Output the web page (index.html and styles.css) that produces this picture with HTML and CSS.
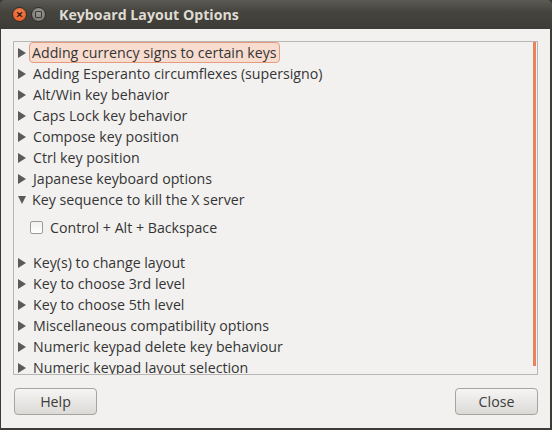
FILE: index.html
```html
<!DOCTYPE html>
<html lang="en">
<head>
    <meta charset="UTF-8">
    <title>Keyboard Layout Options</title>
    <link rel="stylesheet" href="styles.css">
</head>
<body>
    <div class="window">
        <div class="titlebar">
            <span class="wbtn close">&times;</span>
            <span class="wbtn mini"></span>
            <span class="title">Keyboard Layout Options</span>
        </div>
        <div class="content">
            <div class="list">
                <div class="rows">
                    <div class="row"><span class="arrow"></span><span class="label selected">Adding currency signs to certain keys</span></div>
                    <div class="row"><span class="arrow"></span><span class="label">Adding Esperanto circumflexes (supersigno)</span></div>
                    <div class="row"><span class="arrow"></span><span class="label">Alt/Win key behavior</span></div>
                    <div class="row"><span class="arrow"></span><span class="label">Caps Lock key behavior</span></div>
                    <div class="row"><span class="arrow"></span><span class="label">Compose key position</span></div>
                    <div class="row"><span class="arrow"></span><span class="label">Ctrl key position</span></div>
                    <div class="row"><span class="arrow"></span><span class="label">Japanese keyboard options</span></div>
                    <div class="row"><span class="arrow open"></span><span class="label">Key sequence to kill the X server</span></div>
                    <div class="option"><span class="check"></span><span class="label">Control + Alt + Backspace</span></div>
                    <div class="row"><span class="arrow"></span><span class="label">Key(s) to change layout</span></div>
                    <div class="row"><span class="arrow"></span><span class="label">Key to choose 3rd level</span></div>
                    <div class="row"><span class="arrow"></span><span class="label">Key to choose 5th level</span></div>
                    <div class="row"><span class="arrow"></span><span class="label">Miscellaneous compatibility options</span></div>
                    <div class="row"><span class="arrow"></span><span class="label">Numeric keypad delete key behaviour</span></div>
                    <div class="row"><span class="arrow"></span><span class="label">Numeric keypad layout selection</span></div>
                </div>
                <div class="scrollbar"></div>
            </div>
            <div class="actions">
                <button>Help</button>
                <button>Close</button>
            </div>
        </div>
    </div>
</body>
</html>
```
FILE: styles.css
```css
body {
    margin: 0;
    font-family: "Open Sans", "DejaVu Sans", sans-serif;
    background-color: #3c3b37;
}

.window {
    width: 552px;
    height: 430px;
    display: flex;
    flex-direction: column;
}

.titlebar {
    height: 29px;
    display: flex;
    align-items: center;
    background: linear-gradient(#5b5a53, #45443f 40%, #3c3b37);
    border-radius: 5px 5px 0 0;
    padding-left: 12px;
}

.wbtn {
    width: 15px;
    height: 15px;
    border-radius: 50%;
    box-sizing: border-box;
    display: flex;
    align-items: center;
    justify-content: center;
}

.close {
    background: radial-gradient(circle at 50% 35%, #f48454, #e0531c);
    border: 1px solid #2e2d29;
    color: #3a1a0c;
    font-size: 13px;
    line-height: 1;
    font-weight: bold;
}

.mini {
    margin-left: 4px;
    background: radial-gradient(circle at 50% 35%, #9a9892, #75736e);
    border: 1px solid #2e2d29;
}

.mini::after {
    content: "";
    width: 5px;
    height: 5px;
    border: 1px solid #3a3935;
    border-radius: 1px;
}

.title {
    margin-left: 13px;
    color: #dfdbd2;
    font-weight: bold;
    font-size: 14.2px;
}

.content {
    flex: 1;
    background-color: #f2f1f0;
    margin: 0 2px 2px 1px;
    padding: 12px 12px 0 12px;
    display: flex;
    flex-direction: column;
}

.list {
    height: 334px;
    box-sizing: border-box;
    border: 1px solid #b8b6b2;
    display: flex;
    overflow: hidden;
}

.rows {
    flex: 1;
    padding-left: 3px;
}

.row {
    height: 21px;
    display: flex;
    align-items: center;
    color: #353535;
    font-size: 14.2px;
}

.arrow {
    width: 0;
    height: 0;
    border-top: 5px solid transparent;
    border-bottom: 5px solid transparent;
    border-left: 8px solid #5a5a58;
    margin-right: 4px;
    margin-left: 1px;
}

.arrow.open {
    border-left: 4.5px solid transparent;
    border-right: 4.5px solid transparent;
    border-top: 8px solid #5a5a58;
    border-bottom: 0;
    margin-left: 1px;
    margin-right: 3px;
}

.label {
    padding: 0 2px 1px 3px;
    white-space: nowrap;
}

.selected {
    background-color: #f7dccf;
    border: 1px solid #e49c80;
    border-radius: 4px;
    padding: 0 2px 0 2px;
    margin-left: -1px;
}

.option {
    height: 21px;
    padding: 7px 0 14px 13px;
    display: flex;
    align-items: center;
    color: #353535;
    font-size: 14.2px;
}

.check {
    width: 11px;
    height: 11px;
    border: 1px solid #9c9a96;
    border-radius: 2px;
    background: linear-gradient(#f2f1f0, #ffffff);
    margin-right: 4px;
}

.scrollbar {
    width: 3px;
    height: 324px;
    background-color: #e9835a;
    margin-right: 1px;
}

.actions {
    display: flex;
    justify-content: space-between;
    margin-top: 13px;
}

button {
    width: 83px;
    height: 27px;
    font-family: "Open Sans", "DejaVu Sans", sans-serif;
    font-size: 14.2px;
    color: #3c3c3c;
    background: linear-gradient(#f6f5f4, #dcdad7);
    border: 1px solid #a6a4a0;
    border-radius: 4px;
    margin-left: 1px;
}
```
